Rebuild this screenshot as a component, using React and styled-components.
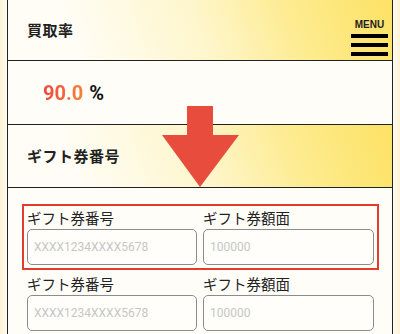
import styled, { createGlobalStyle } from "styled-components";

const GlobalStyle = createGlobalStyle`
  html, body {
    margin: 0;
    padding: 0;
    background: #fdf7e3;
  }
  body {
    font-family: "Noto Sans CJK JP", "Liberation Sans", sans-serif;
    color: #222;
  }
`;

const Page = styled.div`
  width: 400px;
  height: 334px;
  overflow: hidden;
  background: linear-gradient(to right, #fcf3d6 0px, #fefbf0 7px, #fefbf0 393px, #fcf3d6 400px);
`;

const Panel = styled.div`
  position: relative;
  margin: 0 7px;
  border-left: 1px solid #222;
  border-right: 1px solid #222;
  background: #fffdf7;
  height: 334px;
`;

const Header = styled.div`
  height: ${(p) => p.$h}px;
  display: flex;
  align-items: center;
  justify-content: space-between;
  padding: 0 4px 0 19px;
  border-bottom: 1px solid #222;
  background: linear-gradient(70deg, #fffdf5 18%, #fef6cc 50%, #fdeb8e 75%, #fde264 100%);
`;

const Title = styled.h2`
  margin: 0 0 2px;
  font-size: 15px;
  font-weight: 700;
  letter-spacing: 0.5px;
`;

const Menu = styled.div`
  align-self: flex-end;
  display: flex;
  flex-direction: column;
  align-items: center;
  margin-bottom: 4px;
`;

const MenuText = styled.span`
  font-family: "Liberation Sans", sans-serif;
  font-weight: 700;
  font-size: 10px;
  line-height: 10px;
  margin-bottom: 4px;
`;

const Bar = styled.span`
  display: block;
  width: 37px;
  height: 4.5px;
  background: #000;
  margin-top: ${(p) => (p.$first ? 0 : 4.5)}px;
`;

const RateRow = styled.div`
  height: 63px;
  display: flex;
  align-items: center;
  padding-left: 35px;
  border-bottom: 1px solid #222;
`;

const Rate = styled.span`
  font-family: "Roboto", "Liberation Sans", sans-serif;
  font-weight: 700;
  font-size: 20px;
  background: linear-gradient(to right, #ec473f, #f5813a);
  -webkit-background-clip: text;
  background-clip: text;
  color: transparent;
`;

const Unit = styled.span`
  font-family: "Roboto", "Liberation Sans", sans-serif;
  font-weight: 700;
  font-size: 20px;
  margin-left: 6px;
  color: #111;
`;

const Form = styled.div`
  padding: 16px 13px 0 14px;
`;

const Group = styled.div`
  display: grid;
  grid-template-columns: 170px 171px;
  column-gap: 6px;
  padding: 3px 3px 3px 3px;
  border: 2px solid ${(p) => (p.$active ? "#e63a2e" : "transparent")};
`;

const Field = styled.div`
  display: flex;
  flex-direction: column;
`;

const Label = styled.label`
  font-size: 14.5px;
  line-height: 18px;
  margin-bottom: 2px;
  color: #222;
`;

const Input = styled.input`
  box-sizing: border-box;
  width: 100%;
  height: 36px;
  border: 1px solid #8c8c8c;
  border-radius: 5px;
  background: #fffefb;
  padding: 0 6px;
  font-family: "Roboto", "Liberation Sans", sans-serif;
  font-size: 12px;
  outline: none;
  &::placeholder {
    color: #c6c6c6;
  }
`;

const Arrow = styled.svg`
  position: absolute;
  left: 154px;
  top: 106px;
`;

const rows = [true, false];

export default function App() {
  return (
    <Page>
      <GlobalStyle />
      <Panel>
        <Header $h={60}>
          <Title>買取率</Title>
          <Menu>
            <MenuText>MENU</MenuText>
            <Bar $first />
            <Bar />
            <Bar />
          </Menu>
        </Header>
        <RateRow>
          <Rate>90.0</Rate>
          <Unit>%</Unit>
        </RateRow>
        <Header $h={62}>
          <Title>ギフト券番号</Title>
        </Header>
        <Form>
          {rows.map((active, i) => (
            <Group key={i} $active={active}>
              <Field>
                <Label>ギフト券番号</Label>
                <Input placeholder="XXXX1234XXXX5678" />
              </Field>
              <Field>
                <Label>ギフト券額面</Label>
                <Input placeholder="100000" />
              </Field>
            </Group>
          ))}
        </Form>
        <Arrow width="78" height="82" viewBox="0 0 78 82">
          <polygon
            points="25,0 51,0 51,29 77,29 38,81 0,29 25,29"
            fill="#e84c3d"
          />
        </Arrow>
      </Panel>
    </Page>
  );
}
